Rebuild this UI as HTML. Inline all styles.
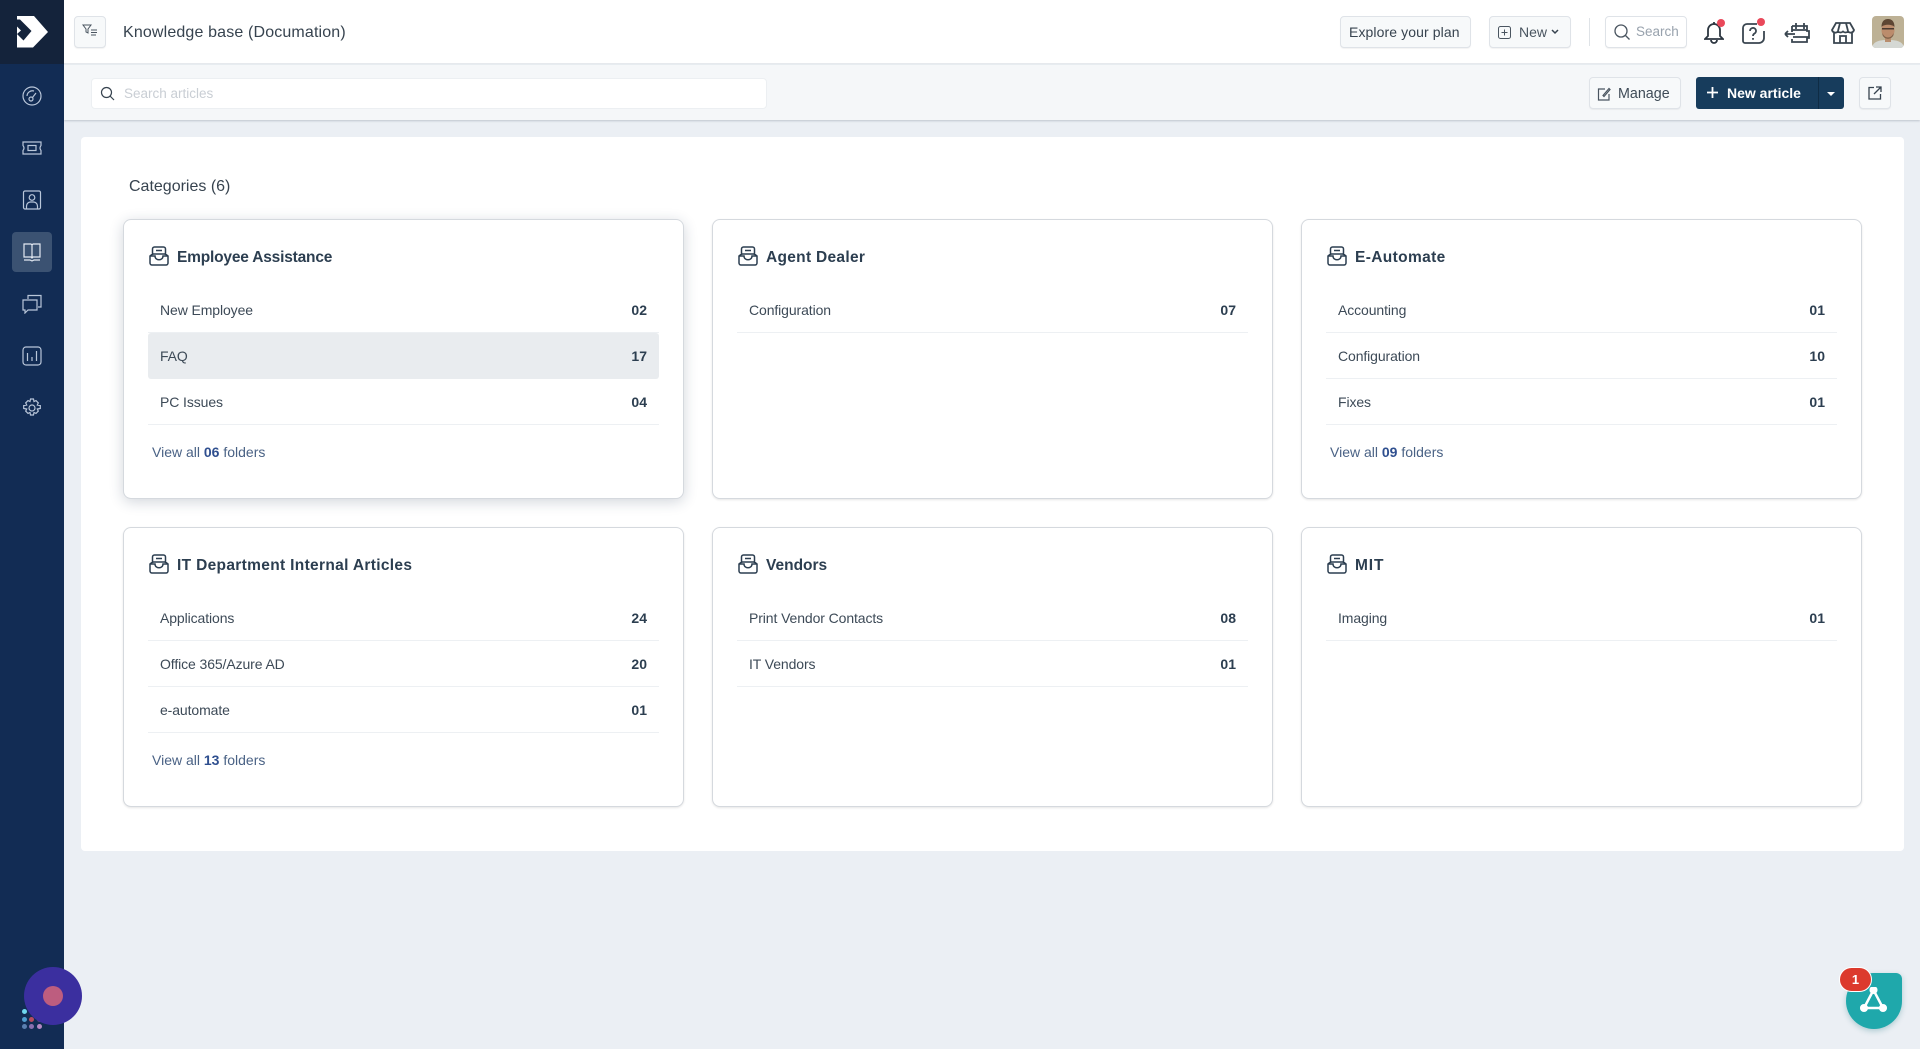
<!DOCTYPE html>
<html><head><meta charset="utf-8"><title>Knowledge base</title>
<style>
*{box-sizing:border-box}
html,body{margin:0;padding:0;width:1920px;height:1049px;overflow:hidden;background:#ebeff4;font-family:"Liberation Sans",sans-serif;color:#2c3e50}
.a{position:absolute}
.t{position:absolute;white-space:nowrap;line-height:20px}
.btn{position:absolute;background:#f7f9fa;border:1px solid #dfe3e8;border-radius:4px;box-shadow:0 1px 1px rgba(0,0,0,.05)}
.card{position:absolute;width:561px;height:280px;background:#fff;border:1px solid #d5d9de;border-radius:8px;box-shadow:0 1px 2px rgba(0,0,0,.1)}
.card.h{box-shadow:0 3px 14px rgba(30,50,80,.2)}
.ct{position:absolute;left:53px;top:28px;font-size:15.5px;font-weight:bold;line-height:20px;color:#2c3e50;white-space:nowrap}
.ic{position:absolute;left:25px;top:26px}
.r{position:absolute;left:24px;width:511px;height:46px;border-bottom:1px solid #edf0f3;font-size:14px;line-height:47px;color:#3d4a57;padding-left:12px;letter-spacing:-.1px}
.r b{position:absolute;right:12px;top:0;color:#2c3e50;font-size:14px;letter-spacing:0}
.r.s{background:#e9ecef;border-radius:3px;border-bottom:0}
.v{position:absolute;left:28px;top:222px;font-size:14px;line-height:20px;color:#4a6285}
.v b{color:#2f4f8f}
svg{display:block}
.si{position:absolute;left:22px;width:20px;height:20px;fill:none;stroke:#b9c6d9;stroke-width:1.200}
.hi{position:absolute;fill:none;stroke:#3a4650;stroke-width:1.800}
.dot{position:absolute;border-radius:50%}
</style></head><body>

<!-- sidebar -->
<div class="a" style="left:0;top:0;width:64px;height:1049px;background:#122c54"></div>
<div class="a" style="left:0;top:0;width:64px;height:64px;background:#14233b"></div>
<svg class="a" style="left:0;top:0" width="64" height="64" viewBox="0 0 64 64"><path fill="#fff" d="M17 16h17l14 16-15 15.500H17z"/><path fill="#14233b" d="M17 19.500l3 0 11.500 11.500-8 9.500-6.500-6.500 4-3.500-4-4z"/><path fill="#14233b" d="M17 38l8 9.500h-2l-6-6z" opacity=".0"/></svg>
<div class="a" style="left:12px;top:232px;width:40px;height:40px;background:#3b5272;border-radius:4px"></div>
<svg class="si" style="top:86px" viewBox="0 0 20 20"><circle cx="10" cy="10" r="9"/><circle cx="9" cy="13" r="2"/><path d="M10.500 11.500L14 7M5 10a5.500 5.500 0 0 1 7-5"/></svg>
<svg class="si" style="top:138px" viewBox="0 0 20 20"><path d="M1 4h18v3.500q-2 2.500 0 5V16H1v-3.500q2-2.500 0-5z"/><rect x="6" y="7.500" width="8" height="5"/></svg>
<svg class="si" style="top:190px" viewBox="0 0 20 20"><rect x="1.500" y="1" width="17" height="18" rx="1.500"/><circle cx="10" cy="7.500" r="2.800"/><path d="M4.500 19v-3a4 4 0 0 1 4-4h3a4 4 0 0 1 4 4v3"/></svg>
<svg class="si" style="top:242px;stroke:#e3e9f2" viewBox="0 0 20 20"><path d="M2 2h7l1 1 1-1h7v13h-7l-1 1-1-1H2zM10 3v13M2 18h6l2 1 2-1h6"/></svg>
<svg class="si" style="top:294px" viewBox="0 0 20 20"><path d="M6 5V1.500h13V13l-3 0M1 6h14v10H6l-3 3v-3H1z"/></svg>
<svg class="si" style="top:346px" viewBox="0 0 20 20"><rect x="1" y="1" width="18" height="18" rx="3"/><path d="M5.500 7v8M10 11v4M14.500 5v10"/></svg>
<svg class="si" style="top:398px" viewBox="0 0 20 20"><circle cx="10" cy="10" r="3"/><path d="M8.500 1h3l.5 2.500 2-.9 2.300 2.300-1 2.100 3 .5v3l-3 .5 1 2.100-2.300 2.300-2-.9-.5 2.500h-3l-.5-2.500-2 .9-2.300-2.300 1-2.100-3-.5v-3l3-.5-1-2.100L6 2.600l2 .9z"/></svg>

<!-- header -->
<div class="a" style="left:64px;top:0;width:1856px;height:64px;background:#fff;border-bottom:1px solid #e6e9ed"></div>
<div class="btn" style="left:74px;top:16px;width:32px;height:32px"></div>
<svg class="a" style="left:82px;top:24px" width="16" height="14" viewBox="0 0 16 14" fill="none" stroke="#4a5560" stroke-width="1"><path d="M1 1h8L6 5v4L4 8V5zM9 6h6M9 8.500h6M9 11h5"/></svg>
<div class="t" style="left:123px;top:23px;font-size:16px;color:#37434f;letter-spacing:.15px">Knowledge base (Documation)</div>

<div class="btn" style="left:1340px;top:16px;width:131px;height:32px"></div>
<div class="t" style="left:1349px;top:22px;font-size:14px;color:#37434f;letter-spacing:.1px">Explore your plan</div>
<div class="btn" style="left:1489px;top:16px;width:82px;height:32px"></div>
<svg class="a" style="left:1498px;top:26px" width="13" height="13" viewBox="0 0 13 13" fill="none" stroke="#4a5560"><rect x=".5" y=".5" width="12" height="12" rx="2"/><path d="M6.500 3.500v6M3.500 6.500h6"/></svg>
<div class="t" style="left:1519px;top:22px;font-size:14px;color:#4a5560">New</div>
<svg class="a" style="left:1551px;top:29px" width="8" height="6" viewBox="0 0 8 6" fill="none" stroke="#37434f" stroke-width="1.500"><path d="M1 1l3 3 3-3"/></svg>
<div class="a" style="left:1589px;top:18px;width:1px;height:28px;background:#dfe3e7"></div>
<div class="btn" style="left:1605px;top:16px;width:82px;height:32px;background:#fff"></div>
<svg class="a" style="left:1613px;top:23px" width="18" height="18" viewBox="0 0 18 18" fill="none" stroke="#4a5560" stroke-width="1.300"><circle cx="8" cy="8" r="6"/><path d="M12.500 12.500L16.500 16.500"/></svg>
<div class="t" style="left:1636px;top:22px;font-size:13.500px;color:#98a2ad">Search</div>

<svg class="hi" style="left:1704px;top:21px;stroke:#2c3640" width="20" height="23" viewBox="0 0 20 23"><path d="M10 1v2a6 6 0 0 0-6 6v6l-3 3h18l-3-3V9a6 6 0 0 0-6-6M7 19a3 3 0 0 0 6 0"/></svg>
<div class="dot" style="left:1717px;top:19px;width:8px;height:8px;background:#e9485a"></div>
<svg class="hi" style="left:1742px;top:23px" width="24" height="21" viewBox="0 0 24 21"><path d="M15 1H5a4 4 0 0 0-4 4v13a2 2 0 0 0 2 2h14a5 5 0 0 0 5-5V8"/><path d="M8 8a3 3 0 1 1 4.500 2.500c-1 .6-1.500 1.200-1.500 2.500M11 15v1.800"/></svg>
<div class="dot" style="left:1757px;top:18px;width:8px;height:8px;background:#e9485a"></div>
<svg class="hi" style="left:1784px;top:22px" width="26" height="22" viewBox="0 0 26 22"><path d="M8 4h15v5h2v7h-2v4H8v-3M8 4v6M12 1v6M20 1v6M8 8h15M9 15h16M1 12h10M1 12l3-3M1 12l3 3"/></svg>
<svg class="hi" style="left:1831px;top:22px" width="24" height="22" viewBox="0 0 24 22"><path d="M5 1h14l4 7a3.500 3.500 0 0 1-6 1.500 3.800 3.800 0 0 1-5 0 3.800 3.800 0 0 1-5 0A3.500 3.500 0 0 1 1 8zM9 1L7 9M15 1l2 8M3 11v10h18V11M9 21v-7h6v7"/></svg>
<svg class="a" style="left:1872px;top:16px" width="32" height="32" viewBox="0 0 32 32"><defs><clipPath id="c"><rect width="32" height="32" rx="4"/></clipPath></defs><g clip-path="url(#c)"><rect width="32" height="32" fill="#bdb195"/><path d="M0 32c1-7 8-8 16-8s15 1 16 8z" fill="#d5d8d4"/><path d="M13 20h6v6h-6z" fill="#b88d6e"/><ellipse cx="16" cy="14" rx="6.500" ry="9" fill="#bb8c6c"/><path d="M9.500 11c0-6 3-8 6.500-8s6.500 2 6.500 8c-2-3-11-3-13 0z" fill="#5d4633"/><rect x="10" y="12" width="12" height="1.500" fill="#4a3a30"/><path d="M10.500 17c2 6 9 6 11 0v2c-2 5-9 5-11 0z" fill="#7d6048"/></g></svg>

<!-- toolbar -->
<div class="a" style="left:64px;top:65px;width:1856px;height:55px;background:#f5f7f9;box-shadow:0 1px 2px rgba(30,45,70,.22)"></div>
<div class="a" style="left:91px;top:78px;width:676px;height:31px;background:#fff;border:1px solid #eceff2;border-radius:4px"></div>
<svg class="a" style="left:100px;top:86px" width="15" height="15" viewBox="0 0 15 15" fill="none" stroke="#37434f" stroke-width="1.200"><circle cx="6.500" cy="6.500" r="5"/><path d="M10 10l4 4"/></svg>
<div class="t" style="left:124px;top:84px;font-size:13.500px;color:#c9ced4">Search articles</div>
<div class="btn" style="left:1589px;top:77px;width:92px;height:32px"></div>
<svg class="a" style="left:1597px;top:87px" width="14" height="14" viewBox="0 0 14 14" fill="none" stroke="#4a5560" stroke-width="1.200"><path d="M8 2H1.500v11H12V7M6 8.500L12 1.500 13 2.500 7 9.500z"/></svg>
<div class="t" style="left:1618px;top:84px;font-size:14.300px;color:#3f4b57">Manage</div>
<div class="a" style="left:1696px;top:77px;width:148px;height:32px;background:#173c5c;border-radius:3px"></div>
<div class="a" style="left:1818px;top:77px;width:1px;height:32px;background:#0f2c45"></div>
<svg class="a" style="left:1707px;top:87px" width="11" height="11" viewBox="0 0 11 11" stroke="#fff" stroke-width="1.800"><path d="M5.500 0v11M0 5.500h11"/></svg>
<div class="t" style="left:1727px;top:83px;font-size:14px;font-weight:bold;color:#fff">New article</div>
<div class="a" style="left:1827px;top:92px;border:4px solid transparent;border-top:4px solid #fff;border-bottom:0"></div>
<div class="btn" style="left:1859px;top:77px;width:32px;height:32px"></div>
<svg class="a" style="left:1868px;top:86px" width="14" height="14" viewBox="0 0 14 14" fill="none" stroke="#37434f" stroke-width="1.300"><path d="M6 1.500H1v11.500h11.500V8M8 1h5v5M13 1L6 8"/></svg>

<!-- main panel -->
<div class="a" style="left:81px;top:137px;width:1823px;height:714px;background:#fff;border-radius:4px"></div>
<div class="t" style="left:129px;top:177px;font-size:16px;color:#37434f">Categories (6)</div>

<div class="card h" style="left:123px;top:219px">
<svg class="ic" width="20" height="20" viewBox="0 0 20 20" fill="none" stroke="#2c3e50" stroke-width="1.500"><path d="M3.500 9V3a2 2 0 0 1 2-2h9a2 2 0 0 1 2 2v6M1 10V17a2 2 0 0 0 2 2h14a2 2 0 0 0 2-2V10l-2.500-2h-13zM1 10h5c0 5 8 5 8 0h5M7 4.500h6"/></svg>
<div class="ct" style="letter-spacing:-.19px">Employee Assistance</div>
<div class="r" style="top:67px">New Employee<b>02</b></div>
<div class="r s" style="top:113px">FAQ<b>17</b></div>
<div class="r" style="top:159px">PC Issues<b>04</b></div>
<div class="v">View all <b>06</b> folders</div>
</div>

<div class="card" style="left:712px;top:219px">
<svg class="ic" width="20" height="20" viewBox="0 0 20 20" fill="none" stroke="#2c3e50" stroke-width="1.500"><path d="M3.500 9V3a2 2 0 0 1 2-2h9a2 2 0 0 1 2 2v6M1 10V17a2 2 0 0 0 2 2h14a2 2 0 0 0 2-2V10l-2.500-2h-13zM1 10h5c0 5 8 5 8 0h5M7 4.500h6"/></svg>
<div class="ct" style="letter-spacing:.3px">Agent Dealer</div>
<div class="r" style="top:67px">Configuration<b>07</b></div>
</div>

<div class="card" style="left:1301px;top:219px">
<svg class="ic" width="20" height="20" viewBox="0 0 20 20" fill="none" stroke="#2c3e50" stroke-width="1.500"><path d="M3.500 9V3a2 2 0 0 1 2-2h9a2 2 0 0 1 2 2v6M1 10V17a2 2 0 0 0 2 2h14a2 2 0 0 0 2-2V10l-2.500-2h-13zM1 10h5c0 5 8 5 8 0h5M7 4.500h6"/></svg>
<div class="ct" style="letter-spacing:.37px">E-Automate</div>
<div class="r" style="top:67px">Accounting<b>01</b></div>
<div class="r" style="top:113px">Configuration<b>10</b></div>
<div class="r" style="top:159px">Fixes<b>01</b></div>
<div class="v">View all <b>09</b> folders</div>
</div>

<div class="card" style="left:123px;top:527px">
<svg class="ic" width="20" height="20" viewBox="0 0 20 20" fill="none" stroke="#2c3e50" stroke-width="1.500"><path d="M3.500 9V3a2 2 0 0 1 2-2h9a2 2 0 0 1 2 2v6M1 10V17a2 2 0 0 0 2 2h14a2 2 0 0 0 2-2V10l-2.500-2h-13zM1 10h5c0 5 8 5 8 0h5M7 4.500h6"/></svg>
<div class="ct" style="letter-spacing:.33px">IT Department Internal Articles</div>
<div class="r" style="top:67px">Applications<b>24</b></div>
<div class="r" style="top:113px">Office 365/Azure AD<b>20</b></div>
<div class="r" style="top:159px">e-automate<b>01</b></div>
<div class="v">View all <b>13</b> folders</div>
</div>

<div class="card" style="left:712px;top:527px">
<svg class="ic" width="20" height="20" viewBox="0 0 20 20" fill="none" stroke="#2c3e50" stroke-width="1.500"><path d="M3.500 9V3a2 2 0 0 1 2-2h9a2 2 0 0 1 2 2v6M1 10V17a2 2 0 0 0 2 2h14a2 2 0 0 0 2-2V10l-2.500-2h-13zM1 10h5c0 5 8 5 8 0h5M7 4.500h6"/></svg>
<div class="ct">Vendors</div>
<div class="r" style="top:67px">Print Vendor Contacts<b>08</b></div>
<div class="r" style="top:113px">IT Vendors<b>01</b></div>
</div>

<div class="card" style="left:1301px;top:527px">
<svg class="ic" width="20" height="20" viewBox="0 0 20 20" fill="none" stroke="#2c3e50" stroke-width="1.500"><path d="M3.500 9V3a2 2 0 0 1 2-2h9a2 2 0 0 1 2 2v6M1 10V17a2 2 0 0 0 2 2h14a2 2 0 0 0 2-2V10l-2.500-2h-13zM1 10h5c0 5 8 5 8 0h5M7 4.500h6"/></svg>
<div class="ct" style="letter-spacing:.9px">MIT</div>
<div class="r" style="top:67px">Imaging<b>01</b></div>
</div>

<!-- bottom left widget -->
<div class="dot" style="left:22px;top:1009px;width:5px;height:5px;background:#6fd6ee"></div>
<div class="dot" style="left:22px;top:1017px;width:5px;height:5px;background:#4f9ccf"></div>
<div class="dot" style="left:29px;top:1017px;width:5px;height:5px;background:#b84a5f"></div>
<div class="dot" style="left:37px;top:1017px;width:5px;height:5px;background:#6a4a78"></div>
<div class="dot" style="left:22px;top:1024px;width:5px;height:5px;background:#5a7fb0"></div>
<div class="dot" style="left:29px;top:1024px;width:5px;height:5px;background:#8a6fb0"></div>
<div class="dot" style="left:37px;top:1024px;width:5px;height:5px;background:#b587c4"></div>
<div class="dot" style="left:24px;top:967px;width:58px;height:58px;background:#3b2f9f"></div>
<div class="dot" style="left:43px;top:986px;width:20px;height:20px;background:#bd5d7f"></div>

<!-- bottom right widget -->
<div class="a" style="left:1846px;top:973px;width:56px;height:56px;background:#1fa8ab;border-radius:28px 6px 28px 28px;box-shadow:0 2px 6px rgba(30,120,130,.3)"></div>
<svg class="a" style="left:1859px;top:987px" width="32" height="30" viewBox="0 0 32 30" stroke="#fff" stroke-width="2.500" fill="#fff"><path d="M14.500 3L5 21h19z" fill="none"/><circle cx="14.500" cy="3" r="2.800"/><circle cx="5" cy="21" r="2.800"/><circle cx="24" cy="21" r="2.800"/></svg>
<div class="a" style="left:1839px;top:967px;width:33px;height:25px;background:#dc3a2d;border:1px solid #fff;border-radius:13px;color:#fff;font-size:13px;font-weight:bold;text-align:center;line-height:23px">1</div>

</body></html>
